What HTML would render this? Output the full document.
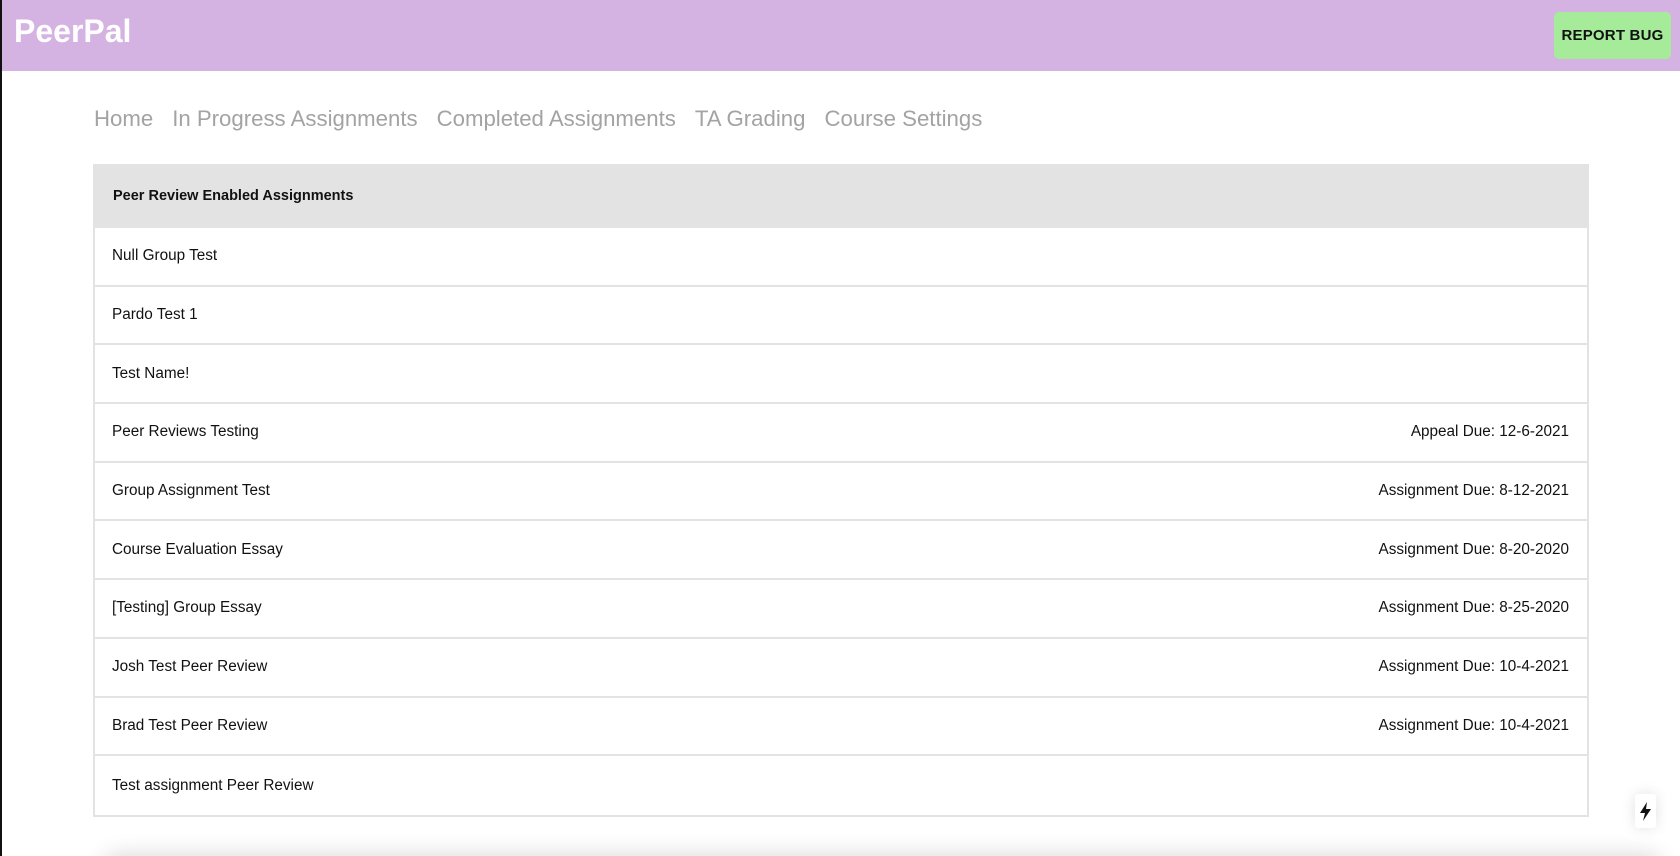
<!DOCTYPE html>
<html><head><meta charset="utf-8"><style>
*{box-sizing:border-box;margin:0;padding:0}
html,body{width:1680px;height:856px;overflow:hidden;background:#fff;font-family:"Liberation Sans",Arial,sans-serif}
body{position:relative;border-left:2px solid #111}
.hdr{position:absolute;left:0;top:0;width:1680px;height:71px;background:#d4b3e3}
.logo{position:absolute;left:12px;top:13px;color:#fff;font-weight:bold;font-size:32px}
.bug{position:absolute;left:1552px;top:12px;width:117px;height:47px;background:#a6eb9a;border-radius:5px;font-size:15px;font-weight:bold;color:#111;text-align:center;line-height:47px;letter-spacing:0.2px}
.nav{position:absolute;left:92px;top:106px;font-size:22.2px;color:#a3a3a3;white-space:nowrap}
.nav span{margin-right:19px}
.tbl{position:absolute;left:91px;top:164px;width:1496px;border:2px solid #e3e3e3;border-top:none}
.th{height:64px;background:#e3e3e3;font-size:14.5px;font-weight:bold;color:#111;line-height:64px;margin:0 -2px;padding-left:20px}
.row{height:58.7px;border-bottom:2px solid #e3e3e3;font-size:15.3px;color:#111;padding:0 18px 0 17px;display:flex;justify-content:space-between;align-items:center}
.row:last-child{border-bottom:none}
.shadow{position:absolute;left:100px;top:862px;width:1560px;height:30px;box-shadow:0 -8px 22px rgba(0,0,0,0.14);border-radius:20px}
.bolt{position:absolute;left:1633px;top:794px;width:21px;height:34px;background:#fff;border-radius:3px;box-shadow:0 0 14px rgba(0,0,0,0.12)}
</style></head><body>
<div class="hdr"><div class="logo">PeerPal</div><div class="bug">REPORT BUG</div></div>
<div class="nav"><span>Home</span><span>In Progress Assignments</span><span>Completed Assignments</span><span>TA Grading</span><span>Course Settings</span></div>
<div class="tbl">
<div class="th">Peer Review Enabled Assignments</div>
<div class="row"><span>Null Group Test</span><span></span></div>
<div class="row"><span>Pardo Test 1</span><span></span></div>
<div class="row"><span>Test Name!</span><span></span></div>
<div class="row"><span>Peer Reviews Testing</span><span>Appeal Due: 12-6-2021</span></div>
<div class="row"><span>Group Assignment Test</span><span>Assignment Due: 8-12-2021</span></div>
<div class="row"><span>Course Evaluation Essay</span><span>Assignment Due: 8-20-2020</span></div>
<div class="row"><span>[Testing] Group Essay</span><span>Assignment Due: 8-25-2020</span></div>
<div class="row"><span>Josh Test Peer Review</span><span>Assignment Due: 10-4-2021</span></div>
<div class="row"><span>Brad Test Peer Review</span><span>Assignment Due: 10-4-2021</span></div>
<div class="row"><span>Test assignment Peer Review</span><span></span></div>
</div>
<div class="shadow"></div>
<div class="bolt"><svg width="21" height="34" viewBox="0 0 21 34"><path d="M12 8 L5 19 H10 L8 27 L16 15 H11 Z" fill="#111"/></svg></div>
</body></html>
